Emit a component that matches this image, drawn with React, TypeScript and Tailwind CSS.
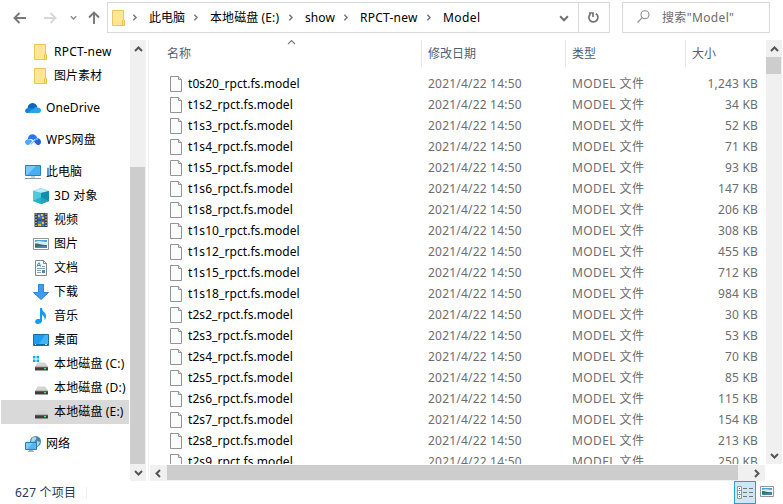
import React from 'react';

type IconProps = { className?: string };

const files: [string, string][] = [
  ['t0s20_rpct.fs.model', '1,243 KB'],
  ['t1s2_rpct.fs.model', '34 KB'],
  ['t1s3_rpct.fs.model', '52 KB'],
  ['t1s4_rpct.fs.model', '71 KB'],
  ['t1s5_rpct.fs.model', '93 KB'],
  ['t1s6_rpct.fs.model', '147 KB'],
  ['t1s8_rpct.fs.model', '206 KB'],
  ['t1s10_rpct.fs.model', '308 KB'],
  ['t1s12_rpct.fs.model', '455 KB'],
  ['t1s15_rpct.fs.model', '712 KB'],
  ['t1s18_rpct.fs.model', '984 KB'],
  ['t2s2_rpct.fs.model', '30 KB'],
  ['t2s3_rpct.fs.model', '53 KB'],
  ['t2s4_rpct.fs.model', '70 KB'],
  ['t2s5_rpct.fs.model', '85 KB'],
  ['t2s6_rpct.fs.model', '115 KB'],
  ['t2s7_rpct.fs.model', '154 KB'],
  ['t2s8_rpct.fs.model', '213 KB'],
  ['t2s9_rpct.fs.model', '250 KB'],
];

function Arrow({ dir, color = '#888888' }: { dir: 'left' | 'right' | 'up'; color?: string }) {
  const d = {
    left: 'M13 7H2M6.5 2 1.5 7l5 5',
    right: 'M1 7h11M7.5 2l5 5-5 5',
    up: 'M7 13V2M2 6.5l5-5 5 5',
  }[dir];
  return (
    <svg className="h-3.5 w-3.5 shrink-0" viewBox="0 0 14 14" fill="none" stroke={color} strokeWidth="1.9">
      <path d={d} />
    </svg>
  );
}

function Chevron({ dir, className = '', width = 2 }: { dir: 'up' | 'down' | 'left' | 'right'; className?: string; width?: number }) {
  const d = { up: 'M1 6l3.5-3.5L8 6', down: 'M1 3l3.5 3.5L8 3', left: 'M6 1 2.5 4.5 6 8', right: 'M3 1l3.5 3.5L3 8' }[dir];
  return (
    <svg className={'shrink-0 ' + className} viewBox="0 0 9 9" fill="none" stroke="currentColor" strokeWidth={width}>
      <path d={d} />
    </svg>
  );
}

function FolderIcon() {
  return (
    <svg className="h-4 w-4" viewBox="0 0 16 16">
      <path d="M1.5.5h11v9.5h1v5.500h-12z" fill="#ffe695" stroke="#eac65c" />
      <path d="M11.500 15.500v-5l1-1 1 1v5z" fill="#ffe082" stroke="#e3b94a" strokeWidth=".8" />
    </svg>
  );
}

function FileIcon() {
  return (
    <svg className="h-4 w-3 shrink-0" viewBox="0 0 12 16">
      <path d="M.5.5h8l3 3v12H.5z" fill="#fafbfb" stroke="#939393" />
      <path d="M8.500.5v3h3" fill="#e5e5e5" stroke="#939393" />
    </svg>
  );
}

function OneDriveIcon() {
  return (
    <svg className="h-4 w-4" viewBox="0 0 16 16">
      <path d="M2.800 9A5 5 0 0 1 7 3c3 0 4.500 1.500 5.300 4l-6 6H3C0 13-.8 9.500 2.800 9" fill="#0a65bd" />
      <path d="M3.300 8c2-1.400 4 .1 5.500 1L4 13H3c-4-.3-3.500-4.500.3-5" fill="#1680d7" />
      <path d="M8.500 9c1.500-3 4-2 4.300-1.600 2.300.1 3.200 1.700 3.200 3.200 0 1.300-.9 2.400-2.500 2.400H3c1.500-2 3.500-3 5.500-4" fill="#28a4e9" />
    </svg>
  );
}

function WpsIcon() {
  return (
    <svg className="h-4 w-4" viewBox="0 0 16 16">
      <path d="M2.800 7C3 4 5 2.300 7.500 2.300c2.300 0 4 1.400 4.500 3.400L8.800 8.500 6.500 7z" fill="#2478fa" />
      <path d="M3.500 7.200c2 0 3 1 4 2.200L4 13H3C1.200 13 0 11.600 0 10.100c0-1.700 1.500-2.900 3.500-2.900" fill="#55a5ff" />
      <path d="M8.300 9.200 11 6.700c2.600-1.200 5 .7 5 3.200 0 1.800-1.400 3.200-3.300 3.200-2 0-2.700-1.600-4.400-3.900" fill="#1d63df" />
      <path d="M5.500 12.300 10 7.900c1.200-1 2-1.100 3-.7" stroke="#70b5ff" strokeWidth="1.600" fill="none" />
      <path d="M4.400 12.900 9.700 7.200M9 10l2.800 3" stroke="#fff" strokeWidth=".7" />
    </svg>
  );
}

function PcIcon() {
  return (
    <svg className="h-4 w-4" viewBox="0 0 16 16">
      <path d="M.5 1.500h15v10H.5z" fill="#47aef0" stroke="#2383b8" />
      <path d="M1 2h10L2 11H1z" fill="#77c9fa" />
      <path d="M6 12h4v2H6z" fill="#bfd5df" />
      <path d="M0 14.500h16" stroke="#879ba7" />
    </svg>
  );
}

function CubeIcon() {
  return (
    <svg className="h-4 w-4" viewBox="0 0 16 16">
      <path d="M0 3l8-3 8 3v10l-8 3-8-3z" fill="#35b9cc" />
      <path d="M0 3l8-3 8 3-8 2z" fill="#bdebf0" />
      <path d="M8 5l8-2v10l-8 3z" fill="#128eaa" />
      <path d="M0 3l8 2v4l-8 4z" fill="#4bcdd9" />
      <path d="M0 13l8-4 8 4-8 3z" fill="#2aaebf" fillOpacity=".7" />
    </svg>
  );
}

function VideoIcon() {
  return (
    <svg className="h-4 w-4" viewBox="0 0 16 16">
      <path d="M1.500 1h13v14h-13z" fill="#353535" />
      <path d="M4.500 1.500h7v6h-7z" fill="#3f73b9" />
      <path d="M4.500 8.500h7v6h-7z" fill="#347dd0" />
      <path d="M5 3h2v2H5zm3-1h2v2H8zm1 3h2v2H9zM5 12h3v2H5zm4-2h2v2H9z" fill="#f1b936" />
      <path d="M3 1.500V15M13 1.500V15" stroke="#e2e2e2" strokeWidth="1.200" strokeDasharray="1.300 1.500" />
    </svg>
  );
}

function PictureIcon({ className = 'h-4 w-4' }: IconProps) {
  return (
    <svg className={className} viewBox="0 0 16 16">
      <path d="M.5 2.500h15v11H.5z" fill="#fff" stroke="#949494" />
      <path d="M2 4h12v8H2z" fill="#4b9fe5" />
      <path d="M2 6c4-2 7 0 12 0v3H2z" fill="#d5edf7" />
      <path d="M2 7.500c4-.5 5 1.500 12 1.500v2H2z" fill="#397064" />
      <path d="M5 10.500c3-1 6-.5 9-.5v2H2z" fill="#4c83bd" />
    </svg>
  );
}

function DocIcon() {
  return (
    <svg className="h-4 w-4" viewBox="0 0 16 16" fill="none">
      <path d="M2.500.5h8l3 3v12h-11z" fill="#fff" stroke="#858585" />
      <path d="M10.500.5v3h3" stroke="#858585" />
      <path d="M9 6.500h3M4 8.500h8M4 10.500h4M4 12.500h4" stroke="#8aa0af" />
      <path d="M4 6.500l1.500-3.500h1l1 3.500M5 5.500h2" stroke="#278bc2" />
      <path d="M9 10h3v3H9z" fill="#438cc7" />
    </svg>
  );
}

function DownloadIcon() {
  return (
    <svg className="h-4 w-4" viewBox="0 0 16 16">
      <path d="M5.500.5h5v8h5L8 15.500.5 8.500h5z" fill="#409cea" stroke="#2c86d2" />
    </svg>
  );
}

function MusicIcon() {
  return (
    <svg className="h-4 w-4" viewBox="0 0 16 16">
      <path d="M7 0h2c0 4 4 4 4 8 0 2-.6 3-1.500 4 .3-3-.6-4-2.500-5v5.500C9 15 6.500 16 4.500 16c-3.300 0-3-4.500.3-5 .8-.1 1.600 0 2.200.3z" fill="#109cef" />
    </svg>
  );
}

function DesktopIcon() {
  return (
    <svg className="h-4 w-4" viewBox="0 0 16 16">
      <path d="M.5 2.500h15v11H.5z" fill="#1d9cf0" stroke="#176fa5" />
      <path d="M12 3h3v9h-9z" fill="#45b3fa" />
      <path d="M1 12.500h14" stroke="#086aaa" />
      <path d="M2 12.500h1m9 0h2" stroke="#c2e6fa" />
    </svg>
  );
}

function DiskIcon({ windows = false }: { windows?: boolean }) {
  return (
    <svg className="h-4 w-4" viewBox="0 0 16 16">
      {windows && <path d="M0 0h2.500v2.500H0zM3.500 0H6v2.500H3.500zM0 3.500h2.500V6H0zM3.500 3.500H6V6H3.500z" fill="#08aeea" />}
      <path d="M4.500 6.500h8l2.500 4.500H2z" fill="#d4d4d4" />
      <path d="M2 11h13v3.500H2z" fill="#3f3f3f" />
      <path d="M2 11h13" stroke="#8b8b8b" strokeWidth=".8" />
      <path d="M11 12h2v1.300h-2z" fill="#39ed67" />
    </svg>
  );
}

function NetworkIcon() {
  return (
    <svg className="h-4 w-4" viewBox="0 0 16 16">
      <circle cx="10.500" cy="5.500" r="5.500" fill="#4486ab" />
      <path d="M7 2l3-1.500 1.500 2L9.500 5.500 6 6zm5 3 3 1-2 4-2-1z" fill="#b1d9e2" />
      <path d="M.5 6.500h11v7H.5z" fill="#55b5f1" stroke="#2680b4" />
      <path d="M1 7h7l-6 6H1z" fill="#7ccbf8" />
      <path d="M4 14.500h4M3 15.500h6" stroke="#a2b5bf" />
    </svg>
  );
}

function SideItem({ icon, label, child = false, selected = false, spacing = '' }: {
  icon: React.ReactNode; label: string; child?: boolean; selected?: boolean; spacing?: string;
}) {
  return (
    <div className={'ml-px flex h-6 shrink-0 items-center gap-[5px] ' + (child ? 'pl-8 ' : 'pl-6 ') + (selected ? 'bg-[#d9d9d9]' : '')}>
      <span className="shrink-0">{icon}</span>
      <span className={'whitespace-nowrap ' + spacing}>{label}</span>
    </div>
  );
}

function Crumb({ label, className }: { label: string; className: string }) {
  return (
    <div className={'flex shrink-0 items-center ' + className}>
      <Chevron dir="right" className="h-[7px] w-[7px] text-[#737373]" width={1.800} />
      <span className="ml-[11px] whitespace-nowrap">{label}</span>
    </div>
  );
}

function AddressBar() {
  return (
    <div className="flex h-10 shrink-0 pt-0.5">
      <div className="flex h-[31px] w-[107px] items-center pl-[13px]">
        <Arrow dir="left" color="#777777" />
        <span className="ml-4 flex"><Arrow dir="right" color="#d6d6d6" /></span>
        <Chevron dir="down" className="ml-[13px] h-[7px] w-[7px] text-[#8a8a8a]" width={1.900} />
        <span className="ml-2.5 flex"><Arrow dir="up" color="#777777" /></span>
      </div>
      <div className="flex h-[31px] w-[503px] border border-[#d9d9d9]">
        <div className="flex w-[450px] items-center pl-[3px]">
          <FolderIcon />
          <Crumb label="此电脑" className="ml-[4px] w-[61px]" />
          <Crumb label="本地磁盘 (E:)" className="w-[95px] tracking-[0.1px]" />
          <Crumb label="show" className="w-[55px] tracking-[0.1px]" />
          <Crumb label="RPCT-new" className="w-[83px] tracking-[0.25px]" />
          <Crumb label="Model" className="tracking-[0.4px]" />
        </div>
        <div className="flex w-[21px] items-center justify-center border-r border-[#d9d9d9]">
          <Chevron dir="down" className="mr-2 h-[10px] w-[10px] text-[#737373]" />
        </div>
        <div className="flex flex-1 items-center justify-center">
          <svg className="mr-px h-[13px] w-[13px]" viewBox="0 0 13 13" fill="none" stroke="#737373" strokeWidth="1.700">
            <path d="M9 2.800A4.500 4.500 0 1 1 3.500 3M2 2h4v4" />
          </svg>
        </div>
      </div>
      <div className="ml-3 flex h-[31px] w-[148px] items-center border border-[#d9d9d9] pl-[14px] text-[#6b6b6b]">
        <svg className="mb-0.5 h-[13px] w-[13px]" viewBox="0 0 13 13" fill="none" stroke="#8b8b96" strokeWidth="1.100">
          <circle cx="8" cy="4.800" r="4" />
          <path d="M5.200 7.600.5 12.500" />
        </svg>
        <span className="ml-[12px] tracking-[0.35px]">搜索"Model"</span>
      </div>
    </div>
  );
}

function Sidebar() {
  return (
    <div className="flex w-[149px] shrink-0 border-r border-[#f0f0f0]">
      <div className="flex w-[129px] flex-col gap-2">
        <div>
          <SideItem child icon={<FolderIcon />} label="RPCT-new" spacing="tracking-[0.25px]" />
          <SideItem child icon={<FolderIcon />} label="图片素材" />
        </div>
        <SideItem icon={<OneDriveIcon />} label="OneDrive" spacing="tracking-[0.1px]" />
        <SideItem icon={<WpsIcon />} label="WPS网盘" spacing="tracking-[0.2px]" />
        <div>
          <SideItem icon={<PcIcon />} label="此电脑" />
          <SideItem child icon={<CubeIcon />} label="3D 对象" spacing="tracking-[0.2px]" />
          <SideItem child icon={<VideoIcon />} label="视频" />
          <SideItem child icon={<PictureIcon />} label="图片" />
          <SideItem child icon={<DocIcon />} label="文档" />
          <SideItem child icon={<DownloadIcon />} label="下载" />
          <SideItem child icon={<MusicIcon />} label="音乐" />
          <SideItem child icon={<DesktopIcon />} label="桌面" />
          <SideItem child icon={<DiskIcon windows />} label="本地磁盘 (C:)" spacing="tracking-[0.15px]" />
          <SideItem child icon={<DiskIcon />} label="本地磁盘 (D:)" spacing="tracking-[0.15px]" />
          <SideItem child selected icon={<DiskIcon />} label="本地磁盘 (E:)" spacing="tracking-[0.15px]" />
        </div>
        <SideItem icon={<NetworkIcon />} label="网络" />
      </div>
      <div className="ml-px flex w-4 flex-col items-center bg-[#f0f0f0] text-[#555555]">
        <Chevron dir="up" className="mt-[5px] h-[9px] w-[9px]" />
        <div className="mt-[113px] h-[297px] w-[15px] self-start bg-[#cdcdcd]" />
        <Chevron dir="down" className="mt-1 h-[9px] w-[9px]" />
      </div>
    </div>
  );
}

function FileList() {
  return (
    <div className="flex min-w-0 flex-1 flex-col">
      <div className="flex h-[424px]">
        <div className="flex w-[617px] flex-col overflow-hidden">
          <div className="flex h-[27px] shrink-0 items-center text-[#4c607a]">
            <div className="relative flex h-full w-[273px] items-center border-r border-[#e5e5e5] pl-[18px]">
              名称
              <Chevron dir="up" className="absolute top-[-2px] left-[138px] h-[9px] w-[9px] text-[#777777]" width={1.100} />
            </div>
            <div className="flex h-full w-[144px] items-center border-r border-[#e5e5e5] pl-[6px]">修改日期</div>
            <div className="flex h-full w-[120px] items-center border-r border-[#e5e5e5] pl-[6px]">类型</div>
            <div className="pl-[6px]">大小</div>
          </div>
          <div className="mt-1.5 text-[#6d6d6d]">
            {files.map(([name, size]) => (
              <div key={name} className="flex h-[21px] items-center">
                <div className="flex w-[279px] items-center gap-[6px] pl-[21px] text-black">
                  <FileIcon />
                  <span className="whitespace-nowrap tracking-[0.07px]">{name}</span>
                </div>
                <div className="w-[144px] tracking-[0.2px]">2021/4/22 14:50</div>
                <div className="w-[86px] tracking-[0.4px]">MODEL 文件</div>
                <div className="w-[100px] text-right tracking-[0.18px]">{size}</div>
              </div>
            ))}
          </div>
        </div>
        <div className="flex w-4 flex-col items-center bg-[#f0f0f0] text-[#555555]">
          <Chevron dir="up" className="mt-[5px] h-[9px] w-[9px]" />
          <div className="mt-[3px] h-[17px] w-[15px] self-start bg-[#cdcdcd]" />
          <Chevron dir="down" className="mt-auto mb-1 h-[9px] w-[9px]" />
        </div>
      </div>
      <div className="mt-px ml-px flex h-4 w-[615px] items-center bg-[#f0f0f0] text-[#555555]">
        <Chevron dir="left" className="ml-[4px] h-[9px] w-[9px]" />
        <div className="ml-[4px] h-[15px] w-[571px] self-start bg-[#cdcdcd]" />
        <Chevron dir="right" className="ml-[14px] h-[9px] w-[9px]" />
      </div>
    </div>
  );
}

function StatusBar() {
  return (
    <div className="flex h-[23px] shrink-0 items-start text-[#1e395b]">
      <div className="ml-[15px] flex h-[23px] w-[72px] items-center">
        <span className="flex-1 tracking-[0.2px]">627 个项目</span>
        <div className="h-3 w-px bg-[#f0f0f0]" />
      </div>
      <div className="ml-[647px] flex h-[23px] w-[22px] items-center justify-center border border-[#26a0da] bg-[#cce8f7]">
        <svg className="h-[14px] w-4" viewBox="0 0 16 14" fill="none">
          <path d="M.5.5h4v12h-4zM.5 4.500h4m-4 4h4" fill="#fff" stroke="#999" />
          <path d="M6 2.500h4m2 0h4m-10 4h4m2 0h4m-10 4h4m2 0h4" stroke="#777" />
          <path d="M2 2h1v1H2z" fill="#555" />
          <path d="M2 6h1v1H2z" fill="#278ddd" />
          <path d="M2 10h1v1H2z" fill="#d23232" />
        </svg>
      </div>
      <svg className="mt-[5px] ml-1 h-[11px] w-[14px]" viewBox="0 0 14 11">
        <path d="M.5.5h13v10H.5z" fill="#fff" stroke="#949494" />
        <path d="M2 2h10v7H2z" fill="#4b9fe5" />
        <path d="M2 4c3-1.500 6 0 10 0v2H2z" fill="#d5edf7" />
        <path d="M2 5c3 0 5 1.500 10 1.500V8H2z" fill="#397064" />
        <path d="M4 8c3-1 5-.7 8-.7V9H2z" fill="#4c83bd" />
      </svg>
    </div>
  );
}

export default function App() {
  return (
    <main className="flex h-[504px] w-[783px] flex-col overflow-hidden bg-white font-['Noto_Sans','Noto_Sans_CJK_SC',sans-serif] text-[12px] leading-4 text-black">
      <AddressBar />
      <div className="flex h-[441px] shrink-0">
        <Sidebar />
        <FileList />
      </div>
      <StatusBar />
    </main>
  );
}
